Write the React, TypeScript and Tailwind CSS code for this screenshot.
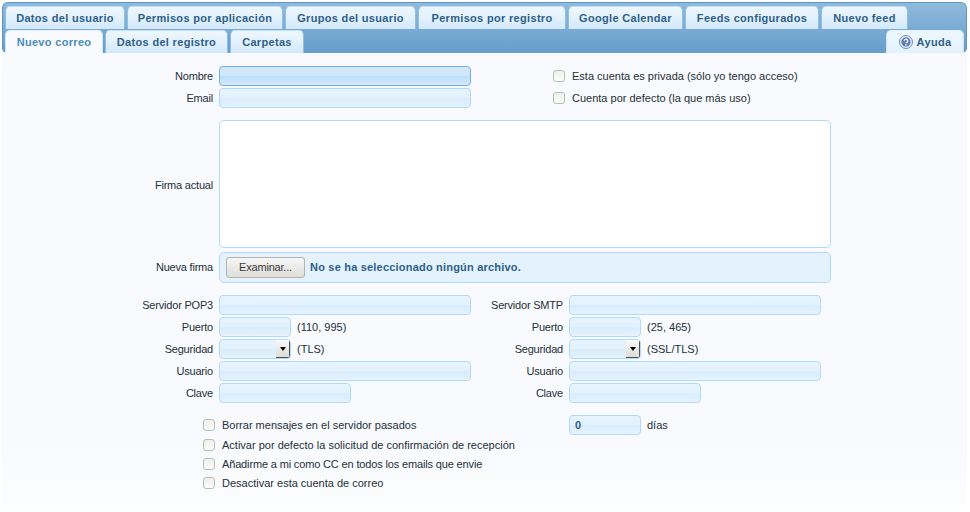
import type { ReactNode } from "react";

const font = "font-['Liberation_Sans',Arial,sans-serif]";
const inputBase = "h-5 rounded-[4px] border";
const inputIdle =
  "border-[#b0dafb] bg-[linear-gradient(#e7f4fe_0%,#e2f1fe_50%,#d9edfc_50%,#e0f0fd_85%,#e8f4fe_100%)]";
const inputFocus =
  "border-[#6fb0e4] bg-[linear-gradient(#d4e9fd_0%,#cfe6fc_50%,#bfdff9_50%,#cbe4fb_85%,#d6eafd_100%)]";

function Tab({ label, active, help, w, icon }: { label: string; active?: boolean; help?: boolean; w: string; icon?: ReactNode }) {
  let look = "border-x-[#8fbfe6] border-t-[#c4e2f9] bg-[linear-gradient(#eef7fe,#e2f1fd_50%,#d3e8fa)] text-[#2f5f88]";
  if (active) look = "border-x-[#cfe5f7] border-t-[#e6f2fb] bg-[#f8fafd] text-[#4b8dbb]";
  if (help) look = "border-x-[#cfe5f7] border-t-[#e6f2fb] bg-[linear-gradient(#eef7fe,#e4f2fe)] text-[#2f5f88]";
  return (
    <div
      className={`${w} ${look} flex h-[23px] items-center justify-center gap-1 rounded-t-[5px] border-x border-t text-[11px] font-bold tracking-[0.32px]`}
    >
      {icon}
      {label}
    </div>
  );
}

function Label({ children, w = "w-[211px]" }: { children: ReactNode; w?: string }) {
  return <div className={`${w} shrink-0 text-right tracking-[-0.2px]`}>{children}</div>;
}

function Field({ w = "w-[252px]", children, focus }: { w?: string; children?: ReactNode; focus?: boolean }) {
  return <div className={`${inputBase} ${focus ? inputFocus : inputIdle} ${w} flex shrink-0 items-center`}>{children}</div>;
}

function Check({ label, className = "" }: { label: string; className?: string }) {
  return (
    <div className={`flex h-5 items-center ${className}`}>
      <span className="h-3 w-3 shrink-0 rounded-[3px] border border-[#bdbdb6] bg-[linear-gradient(#efefec,#fcfcfb)]" />
      <span className="ml-[7px] whitespace-nowrap">{label}</span>
    </div>
  );
}

function SelectBox() {
  return (
    <div className={`${inputBase} ${inputIdle} flex w-[72px] shrink-0 justify-end overflow-hidden`}>
      <span className="flex w-[14px] items-center justify-center border-r border-b border-r-[#4e5156] border-b-[#4e5156] bg-[linear-gradient(#fafaf9,#dcdcd8)]">
        <span className="h-0 w-0 border-x-[3.5px] border-t-4 border-x-transparent border-t-black" />
      </span>
    </div>
  );
}

function ServerColumn({ title, ports, security, first }: { title: string; ports: string; security: string; first?: boolean }) {
  const lw = first ? "w-[211px]" : "w-[92px]";
  const rows: [string, ReactNode][] = [
    [title, <Field key="a" />],
    ["Puerto", <Field key="b" w="w-[72px]" />],
    ["Seguridad", <SelectBox key="c" />],
    ["Usuario", <Field key="d" />],
    ["Clave", <Field key="e" w="w-[132px]" />],
  ];
  return (
    <div className="flex flex-col gap-0.5">
      {rows.map(([name, control], i) => (
        <div key={name} className="flex h-5 items-center gap-1.5">
          <Label w={lw}>{name}</Label>
          {control}
          {i === 1 && <span>{ports}</span>}
          {i === 2 && <span>{security}</span>}
        </div>
      ))}
    </div>
  );
}

export default function App() {
  return (
    <div className={`h-[512px] w-[970px] overflow-hidden bg-white pl-0.5 pt-0.5 text-[11px] text-[#26303a] ${font}`}>
      <div className="w-[965px]">
        {/* Tabs */}
        <div className="h-[51px] rounded-[6px] rounded-b-[5px] border border-b-0 border-[#5f97c4] bg-[linear-gradient(#8fbadb,#659dcb)] pl-0.5 pt-[3px]">
          <div className="flex gap-0.5">
            <Tab label="Datos del usuario" w="w-[120px]" />
            <Tab label="Permisos por aplicación" w="w-[156px]" />
            <Tab label="Grupos del usuario" w="w-[131px]" />
            <Tab label="Permisos por registro" w="w-[148px]" />
            <Tab label="Google Calendar" w="w-[115px]" />
            <Tab label="Feeds configurados" w="w-[134px]" />
            <Tab label="Nuevo feed" w="w-[87px]" />
          </div>
          <div className="mt-px flex gap-0.5 pr-0.5">
            <Tab label="Nuevo correo" active w="w-[98px]" />
            <Tab label="Datos del registro" w="w-[123px]" />
            <Tab label="Carpetas" w="w-[74px]" />
            <div className="ml-auto">
              <Tab
                label="Ayuda"
                help
                w="w-[78px]"
                icon={
                  <svg viewBox="0 0 14 14" className="h-3.5 w-3.5">
                    <circle cx="7" cy="7" r="6.5" fill="#e8eef6" stroke="#6f90c0" />
                    <circle cx="7" cy="7" r="4.7" fill="#5f82b4" />
                    <path d="M5.3 5.8a1.7 1.6 0 1 1 2.5 1.5c-.6.3-.8.5-.8 1" fill="none" stroke="#fff" strokeWidth="1.3" />
                    <circle cx="7" cy="10" r=".8" fill="#fff" />
                  </svg>
                }
              />
            </div>
          </div>
        </div>

        {/* Form */}
        <div className="h-[451px] bg-[linear-gradient(#f8fafd_0%,#f8fafd_88%,#fcfdfe_100%)] pt-[13px]">
          <div className="flex h-[42px] flex-col gap-0.5">
            <div className="flex h-5 items-center gap-1.5">
              <Label>Nombre</Label>
              <Field focus />
              <Check label="Esta cuenta es privada (sólo yo tengo acceso)" className="ml-[76px]" />
            </div>
            <div className="flex h-5 items-center gap-1.5">
              <Label>Email</Label>
              <Field />
              <Check label="Cuenta por defecto (la que más uso)" className="ml-[76px]" />
            </div>
          </div>

          <div className="mt-3 flex h-[128px] items-center gap-1.5">
            <Label>
              <span className="relative top-px">Firma actual</span>
            </Label>
            <div className="h-full w-[612px] rounded-[5px] border border-[#b0dafb] bg-white" />
          </div>

          <div className="mt-1 flex h-[31px] items-center gap-1.5">
            <Label>Nueva firma</Label>
            <div className="flex h-full w-[612px] items-center rounded-[5px] border border-[#b0dafb] bg-[#e4f2fe] pl-1.5">
              <div className="flex h-[21px] w-[79px] items-center justify-center rounded-[3px] border border-[#b3b3b0] bg-[linear-gradient(#f6f6f5,#dededb)] tracking-[-0.2px] text-[#3a3a3a]">
                Examinar...
              </div>
              <span className="ml-[5px] text-[11px] font-bold tracking-[0.2px] text-[#2f5f88]">
                No se ha seleccionado ningún archivo.
              </span>
            </div>
          </div>

          <div className="mt-3 flex">
            <ServerColumn first title="Servidor POP3" ports="(110, 995)" security="(TLS)" />
            <ServerColumn title="Servidor SMTP" ports="(25, 465)" security="(SSL/TLS)" />
          </div>

          <div className="mt-3 pl-[201px]">
            <div className="flex h-5 items-center">
              <Check label="Borrar mensajes en el servidor pasados" className="w-[366px]" />
              <Field w="w-[72px]">
                <span className="pl-[5px] font-bold text-[#2f5f88]">0</span>
              </Field>
              <span className="ml-1.5">días</span>
            </div>
            <Check label="Activar por defecto la solicitud de confirmación de recepción" />
            <Check label="Añadirme a mi como CC en todos los emails que envie" className="-mt-px tracking-[-0.15px]" />
            <Check label="Desactivar esta cuenta de correo" className="-mt-px" />
          </div>
        </div>
      </div>
    </div>
  );
}
